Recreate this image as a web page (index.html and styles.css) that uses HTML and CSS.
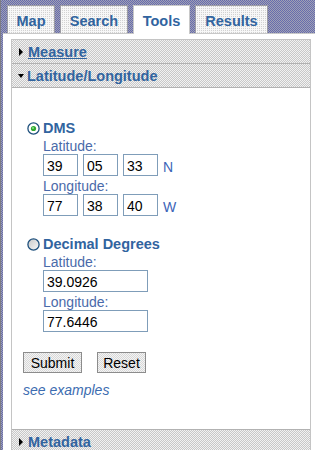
FILE: index.html
```html
<!DOCTYPE html>
<html lang="en">
<head>
    <meta charset="UTF-8">
    <title>Tools</title>
    <link rel="stylesheet" href="styles.css">
</head>
<body>
    <div class="page">
        <div class="edge"></div>
        <div class="main">
            <div class="tabs">
                <div class="tab tab-map">Map</div>
                <div class="tab tab-search">Search</div>
                <div class="tab tab-tools active">Tools</div>
                <div class="tab tab-results">Results</div>
            </div>
            <div class="panel">
                <div class="box">
                    <div class="head"><span class="arrow"></span><a href="#" class="head-link">Measure</a></div>
                    <div class="head"><span class="arrow down"></span>Latitude/Longitude</div>
                    <div class="content">
                        <div class="opt">
                            <svg width="13" height="13" viewBox="0 0 13 13">
                                <circle cx="6.5" cy="6.5" r="5.6" fill="#fff" stroke="#1d4f7c" stroke-width="1.3"/>
                                <circle cx="6.5" cy="6.5" r="2.6" fill="#2fa82f"/>
                                <circle cx="6" cy="6" r="1" fill="#8fe08f"/>
                            </svg>
                            <span>DMS</span>
                        </div>
                        <div class="fields">
                            <div class="lbl">Latitude:</div>
                            <div class="row">
                                <input class="small" value="39">
                                <input class="small" value="05">
                                <input class="small" value="33">
                                <span class="dir">N</span>
                            </div>
                            <div class="lbl">Longitude:</div>
                            <div class="row">
                                <input class="small" value="77">
                                <input class="small" value="38">
                                <input class="small" value="40">
                                <span class="dir">W</span>
                            </div>
                        </div>
                        <div class="opt second">
                            <svg width="13" height="13" viewBox="0 0 13 13">
                                <defs>
                                    <linearGradient id="rg" x1="0" y1="0" x2="1" y2="1">
                                        <stop offset="0" stop-color="#c8c8c8"/>
                                        <stop offset="1" stop-color="#f8f8f8"/>
                                    </linearGradient>
                                </defs>
                                <circle cx="6.5" cy="6.5" r="5.6" fill="url(#rg)" stroke="#1d4f7c" stroke-width="1.3"/>
                            </svg>
                            <span>Decimal Degrees</span>
                        </div>
                        <div class="fields">
                            <div class="lbl">Latitude:</div>
                            <div class="row"><input class="wide" value="39.0926"></div>
                            <div class="lbl">Longitude:</div>
                            <div class="row"><input class="wide" value="77.6446"></div>
                        </div>
                        <div class="buttons">
                            <button class="btn btn-submit">Submit</button>
                            <button class="btn btn-reset">Reset</button>
                        </div>
                        <a href="#" class="examples">see examples</a>
                    </div>
                    <div class="head meta"><span class="arrow"></span>Metadata</div>
                </div>
            </div>
        </div>
    </div>
</body>
</html>
```

FILE: styles.css
```css
body {
    margin: 0;
    font-family: "Liberation Sans", Arial, sans-serif;
    background: #fff;
}
.page {
    display: flex;
    height: 450px;
    overflow: hidden;
}
.edge {
    width: 2px;
    border-left: 1px solid #7c7c84;
    background: repeating-conic-gradient(#666cae 0 25%, #a0a0b4 0 50%) 0 0 / 2px 2px;
}
.main {
    flex: 1;
    display: flex;
    flex-direction: column;
}
.tabs {
    display: flex;
    gap: 5px;
    height: 28px;
    padding: 5px 0 0 4px;
    background: repeating-conic-gradient(#666cae 0 25%, #a0a0b4 0 50%) 0 0 / 2px 2px;
}
.tab {
    box-sizing: border-box;
    height: 28px;
    border: 1px solid #9c9ca4;
    border-bottom: none;
    display: flex;
    align-items: center;
    justify-content: center;
    padding-top: 2px;
    font-size: 14.5px;
    font-weight: bold;
    color: #31649f;
    background: repeating-conic-gradient(#d2d2d2 0 25%, #f7f7f7 0 100%) 0 0 / 2px 2px;
}
.tab-map { width: 48px; }
.tab-search { width: 68px; }
.tab-tools { width: 57px; }
.tab-results { width: 73px; }
.tab.active {
    background: #fff;
    height: 29px;
    border-color: #c8c8c8;
    position: relative;
}
.panel {
    flex: 1;
    border-top: 1px solid #c8c8c8;
    padding: 5px 4px 0 8px;
}
.box {
    border: 1px solid #c4c4c4;
    border-bottom: none;
    height: 100%;
}
.head {
    height: 23px;
    display: flex;
    align-items: center;
    padding-left: 7px;
    border-bottom: 1px solid #b2b2b2;
    font-size: 14.5px;
    font-weight: bold;
    color: #31649f;
    background: repeating-conic-gradient(#c8c8c8 0 25%, #f2f2f2 0 50%) 0 0 / 2px 2px;
}
.head-link {
    color: #31649f;
}
.arrow {
    width: 0;
    height: 0;
    border-top: 4px solid transparent;
    border-bottom: 4px solid transparent;
    border-left: 4px solid #000;
    margin-right: 5px;
}
.arrow.down {
    border-left: 3.5px solid transparent;
    border-right: 3.5px solid transparent;
    border-top: 4px solid #000;
    border-bottom: none;
    margin-left: -1px;
    margin-right: 3px;
}
.content {
    padding: 32px 0 30px 11px;
}
.opt {
    display: flex;
    align-items: center;
    gap: 3px;
    height: 16px;
    margin-left: 4px;
    font-size: 14.5px;
    font-weight: bold;
    color: #31649f;
}
.opt.second {
    margin-top: 20px;
}
.fields {
    padding-left: 20px;
}
.lbl {
    height: 18px;
    line-height: 20px;
    font-size: 14px;
    color: #4a6aaa;
}
.row {
    display: flex;
    align-items: center;
    gap: 5px;
}
input {
    box-sizing: border-box;
    height: 22px;
    border: 1px solid #7f9db9;
    padding: 1px 3px 0;
    font-family: "Liberation Sans", Arial, sans-serif;
    font-size: 14px;
    color: #000;
    background: #fff;
}
.small { width: 35px; }
.wide { width: 105px; }
.dir {
    font-size: 14px;
    color: #3c64b8;
    padding-top: 3px;
}
.buttons {
    display: flex;
    gap: 15px;
    margin-top: 20px;
}
.btn {
    height: 21px;
    border: 1px solid #8c8c8c;
    padding: 0;
    font-family: "Liberation Sans", Arial, sans-serif;
    font-size: 14px;
    color: #000;
    background: repeating-conic-gradient(#d8d8d8 0 25%, #f4f4f4 0 50%) 0 0 / 2px 2px;
}
.btn-submit { width: 59px; }
.btn-reset { width: 49px; }
.examples {
    display: block;
    margin-top: 8px;
    line-height: 18px;
    font-size: 14px;
    font-style: italic;
    color: #3c6cb0;
    text-decoration: none;
}
.head.meta {
    border-top: 1px solid #b2b2b2;
    border-bottom: none;
}
```
